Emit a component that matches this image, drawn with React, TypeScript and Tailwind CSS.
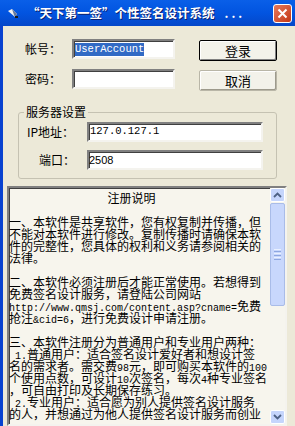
import React from "react";

const CJK = { fontFamily: '"Noto Sans CJK SC", "Noto Sans", sans-serif' };

// 凹陷的输入框边框
const sunken =
  "border-2 border-t-[#808080] border-l-[#808080] border-b-[#f4f3ee] border-r-[#f4f3ee] shadow-[inset_1px_1px_0_#404040]";

function Btn({ children, def }: { children: React.ReactNode; def?: boolean }) {
  return (
    <button
      className={
        def
          ? "h-[21px] w-[78px] rounded-[2px] border border-black bg-[#f3f2ea] text-[13px] leading-none text-black shadow-[inset_1px_1px_0_#ffffff,inset_-1px_-1px_0_#808080]"
          : "h-[21px] w-[78px] rounded-[2px] border border-[#b9b6a7] bg-[#f3f2ea] text-[13px] leading-none text-black shadow-[inset_1px_1px_0_#ffffff,inset_-1px_-1px_0_#9d9a8c]"
      }
      style={CJK}
    >
      {children}
    </button>
  );
}

function Mono({ children }: { children: React.ReactNode }) {
  return (
    <span className="text-[10px] leading-[12px]" style={{ fontFamily: '"Liberation Mono", monospace' }}>
      {children}
    </span>
  );
}

function Line({ children, className = "" }: { children?: React.ReactNode; className?: string }) {
  return <div className={`h-[12px] overflow-visible leading-[12px] ${className}`}>{children}</div>;
}

function ScrollBar() {
  return (
    <div className="flex w-[15px] flex-col bg-[#f6f5ee]">
      <div className="flex h-[14px] items-center justify-center rounded-[2px] border border-white bg-[#c5d5fc]">
        <svg width="9" height="6" viewBox="0 0 9 6">
          <path d="M1 5 L4.5 1.5 L8 5" fill="none" stroke="#4d6185" strokeWidth="1.8" />
        </svg>
      </div>
      <div className="mt-px flex h-[103px] items-center justify-center rounded-[2px] border border-[#a9bce8] bg-[#c8d7fc]">
        <div className="flex flex-col gap-[1px]">
          <div className="h-px w-[7px] bg-[#e9f0ff]" />
          <div className="h-px w-[7px] bg-[#8ea7e0]" />
          <div className="h-px w-[7px] bg-[#e9f0ff]" />
          <div className="h-px w-[7px] bg-[#8ea7e0]" />
          <div className="h-px w-[7px] bg-[#e9f0ff]" />
          <div className="h-px w-[7px] bg-[#8ea7e0]" />
        </div>
      </div>
      <div className="flex-1" />
      <div className="flex h-[14px] items-center justify-center rounded-[2px] border border-white bg-[#c5d5fc]">
        <svg width="9" height="6" viewBox="0 0 9 6">
          <path d="M1 1 L4.5 4.5 L8 1" fill="none" stroke="#4d6185" strokeWidth="1.8" />
        </svg>
      </div>
    </div>
  );
}

export default function App() {
  return (
    <div className="flex h-[426px] w-[295px] flex-col overflow-hidden bg-[#ece9d8]" style={CJK}>
      {/* 标题栏 */}
      <div className="flex h-[26px] shrink-0 items-center bg-gradient-to-b from-[#0a5fe8] via-[#0254e0] to-[#0447c9] pl-[8px] pr-[3px]">
        <svg width="10" height="9" viewBox="0 0 10 9" className="mr-[9px]">
          <path d="M0 2 L4 0 L9 5 L7 8 Z" fill="#f2f2f2" />
          <path d="M4 0 L9 5 L7 8 L6 6 Z" fill="#6a7a99" />
          <rect x="7" y="7" width="3" height="2" fill="#1c1c1c" />
        </svg>
        <span className="whitespace-nowrap text-[12.5px] font-bold leading-none text-white [text-shadow:1px_1px_0_#0a1f6e]">
          “天下第一签”个性签名设计系统
        </span>
        <span className="ml-[10px] text-[12px] font-bold tracking-[3px] text-white">...</span>
        <div className="flex-1" />
        <div className="flex h-[19px] w-[19px] items-center justify-center rounded-[3px] border border-white bg-gradient-to-br from-[#e8795a] to-[#c2350f]">
          <svg width="11" height="11" viewBox="0 0 11 11">
            <path d="M1.5 1.5 L9.5 9.5 M9.5 1.5 L1.5 9.5" stroke="#fff" strokeWidth="2" />
          </svg>
        </div>
      </div>

      <div className="flex flex-1 flex-col border-l-[3px] border-[#0842d0]">
        {/* 登录区 */}
        <div className="mt-[11px] flex flex-col gap-[6px] pl-[22px]">
          <div className="flex items-center">
            <span className="w-[47px] text-[12px] leading-none">帐号：</span>
            <div className={`flex h-[20px] w-[103px] items-center bg-white pl-px ${sunken}`}>
              <span
                className="bg-[#316ac5] text-[10.5px] leading-[13px] text-white"
                style={{ fontFamily: '"Liberation Mono", monospace' }}
              >
                UserAccount
              </span>
            </div>
            <div className="ml-[24px]">
              <Btn def>登录</Btn>
            </div>
          </div>
          <div className="flex items-center">
            <span className="w-[47px] text-[12px] leading-none">密码：</span>
            <div className={`h-[20px] w-[103px] bg-white ${sunken}`} />
            <div className="ml-[24px]">
              <Btn>取消</Btn>
            </div>
          </div>
        </div>

        {/* 服务器设置 */}
        <fieldset className="ml-[15px] mt-[14px] h-[74px] w-[259px] shrink-0 rounded-[3px] border border-[#c5c2b2] px-0 pb-0">
          <legend className="ml-[5px] px-[2px] text-[12px] leading-[14px]">服务器设置</legend>
          <div className="mt-[3px] flex flex-col gap-[8px]">
            <div className="flex items-center">
              <span className="w-[66px] pl-[8px] text-[12px] leading-none">IP地址：</span>
              <div
                className={`ml-[2px] flex h-[20px] w-[176px] items-center bg-white pl-[1px] text-[10.5px] ${sunken}`}
                style={{ fontFamily: '"Liberation Mono", monospace' }}
              >
                127.0.127.1
              </div>
            </div>
            <div className="flex items-center">
              <span className="w-[66px] pl-[20px] text-[12px] leading-none">端口：</span>
              <div
                className={`ml-[2px] flex h-[20px] w-[176px] items-center bg-white text-[11px] ${sunken}`}
                style={{ fontFamily: '"Liberation Sans", sans-serif' }}
              >
                2508
              </div>
            </div>
          </div>
        </fieldset>

        {/* 注册说明 */}
        <div className={`ml-[4px] mt-[7px] flex h-[240px] w-[280px] shrink-0 bg-[#f7f5ed] ${sunken}`}>
          <div className="flex-1 overflow-hidden whitespace-nowrap pt-[4px] text-[12px] leading-[12px] text-black">
            <Line className="pr-[16px] text-center">注册说明</Line>
            <Line />
            <Line>一、本软件是共享软件，您有权复制并传播，但</Line>
            <Line>不能对本软件进行修改。复制传播时请确保本软</Line>
            <Line>件的完整性，您具体的权利和义务请参阅相关的</Line>
            <Line>法律。</Line>
            <Line />
            <Line>二、本软件必须注册后才能正常使用。若想得到</Line>
            <Line>免费签名设计服务，请登陆公司网站</Line>
            <Line>
              <Mono>http://www.qmsj.com/content.asp?cname=</Mono>免费
            </Line>
            <Line>
              抢注<Mono>&amp;cid=6</Mono>，进行免费设计申请注册。
            </Line>
            <Line />
            <Line>三、本软件注册分为普通用户和专业用户两种：</Line>
            <Line className="pl-[6px]">
              <Mono>1.</Mono>普通用户：适合签名设计爱好者和想设计签
            </Line>
            <Line>
              名的需求者。需交费<Mono>98</Mono>元，即可购买本软件的<Mono>100</Mono>
            </Line>
            <Line>
              个使用点数，可设计<Mono>10</Mono>次签名，每次<Mono>4</Mono>种专业签名
            </Line>
            <Line>，可自由打印及长期保存练习。</Line>
            <Line className="pl-[6px]">
              <Mono>2.</Mono>专业用户：适合愿为别人提供签名设计服务
            </Line>
            <Line>的人，并想通过为他人提供签名设计服务而创业</Line>
          </div>
          <ScrollBar />
        </div>
      </div>
    </div>
  );
}
